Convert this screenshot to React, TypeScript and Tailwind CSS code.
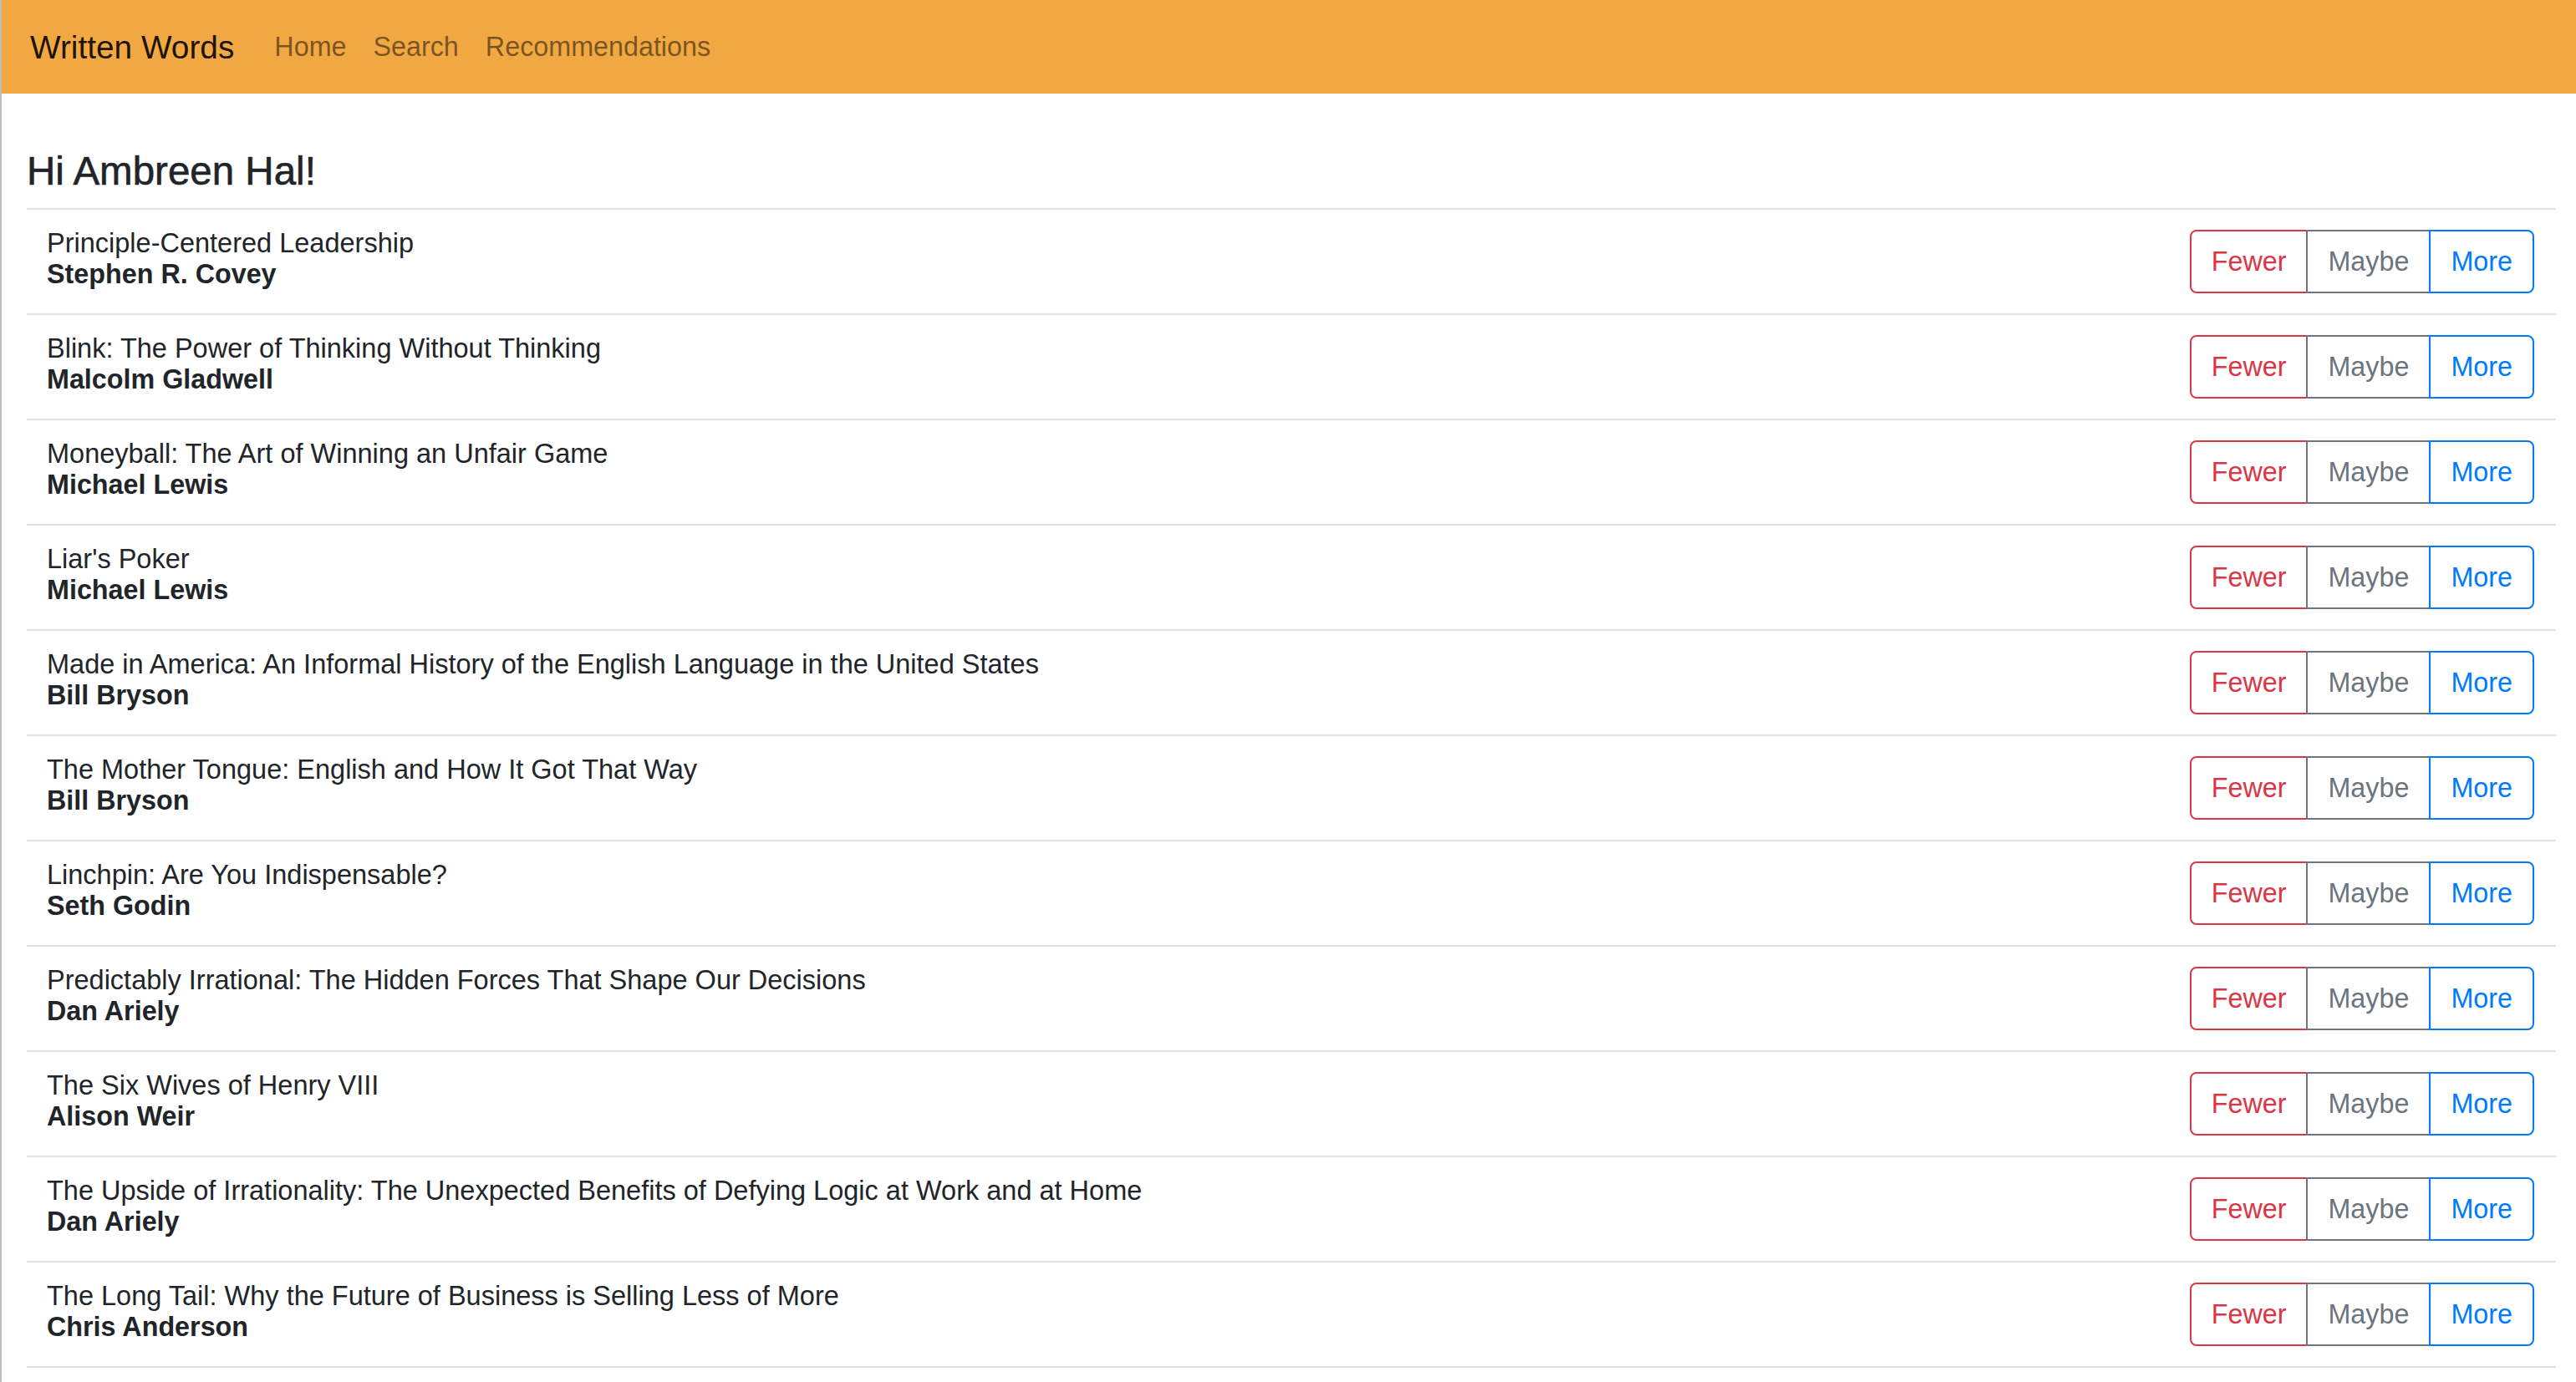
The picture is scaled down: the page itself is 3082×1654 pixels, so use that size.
import React from "react";

const books: { title: string; author: string }[] = [
  { title: "Principle-Centered Leadership", author: "Stephen R. Covey" },
  { title: "Blink: The Power of Thinking Without Thinking", author: "Malcolm Gladwell" },
  { title: "Moneyball: The Art of Winning an Unfair Game", author: "Michael Lewis" },
  { title: "Liar's Poker", author: "Michael Lewis" },
  { title: "Made in America: An Informal History of the English Language in the United States", author: "Bill Bryson" },
  { title: "The Mother Tongue: English and How It Got That Way", author: "Bill Bryson" },
  { title: "Linchpin: Are You Indispensable?", author: "Seth Godin" },
  { title: "Predictably Irrational: The Hidden Forces That Shape Our Decisions", author: "Dan Ariely" },
  { title: "The Six Wives of Henry VIII", author: "Alison Weir" },
  { title: "The Upside of Irrationality: The Unexpected Benefits of Defying Logic at Work and at Home", author: "Dan Ariely" },
  { title: "The Long Tail: Why the Future of Business is Selling Less of More", author: "Chris Anderson" },
];

function Row({ title, author }: { title: string; author: string }) {
  return (
    <div className="flex items-center justify-between border-t-2 border-[#dee2e6] pl-[24px] pr-[26px] h-[126px]">
      <div className="pb-[7px] leading-[37px] text-[#212529]">
        <div className="text-[32.5px]">{title}</div>
        <div className="text-[32.3px] font-bold">{author}</div>
      </div>
      <div className="flex text-[32.3px] leading-[48px]">
        <button className="relative border-2 border-[#dc3545] text-[#dc3545] bg-white px-[24px] py-[12px] rounded-l-[8px]">
          Fewer
        </button>
        <button className="relative -ml-[2px] border-2 border-[#6c757d] text-[#6c757d] bg-white px-[24px] py-[12px]">
          Maybe
        </button>
        <button className="relative -ml-[2px] border-2 border-[#007bff] text-[#007bff] bg-white px-[24px] py-[12px] rounded-r-[8px]">
          More
        </button>
      </div>
    </div>
  );
}

export default function App() {
  return (
    <div
      className="min-h-screen bg-white border-l-2 border-[#bdbdbd]"
      style={{ fontFamily: '"Liberation Sans", Arial, sans-serif' }}
    >
      <nav className="flex items-center h-[112px] bg-[#f2a842] pl-[34px]">
        <span className="text-[38.8px] leading-[57px] text-[rgba(0,0,0,0.9)] mr-[32px]">Written Words</span>
        <div className="flex text-[32.3px] leading-[48px] text-[rgba(0,0,0,0.5)]">
          <a className="px-[16px]">Home</a>
          <a className="px-[16px]">Search</a>
          <a className="px-[16px]">Recommendations</a>
        </div>
      </nav>
      <div className="pl-[30px] pr-[24px]">
        <h4 className="mt-[64px] mb-[15px] text-[47.5px] leading-[58px] font-medium text-[#212529] [-webkit-text-stroke:0.6px_#212529]">
          Hi Ambreen Hal!
        </h4>
        <div className="border-b-2 border-[#dee2e6]">
          {books.map((b, i) => (
            <Row key={i} title={b.title} author={b.author} />
          ))}
        </div>
      </div>
    </div>
  );
}
